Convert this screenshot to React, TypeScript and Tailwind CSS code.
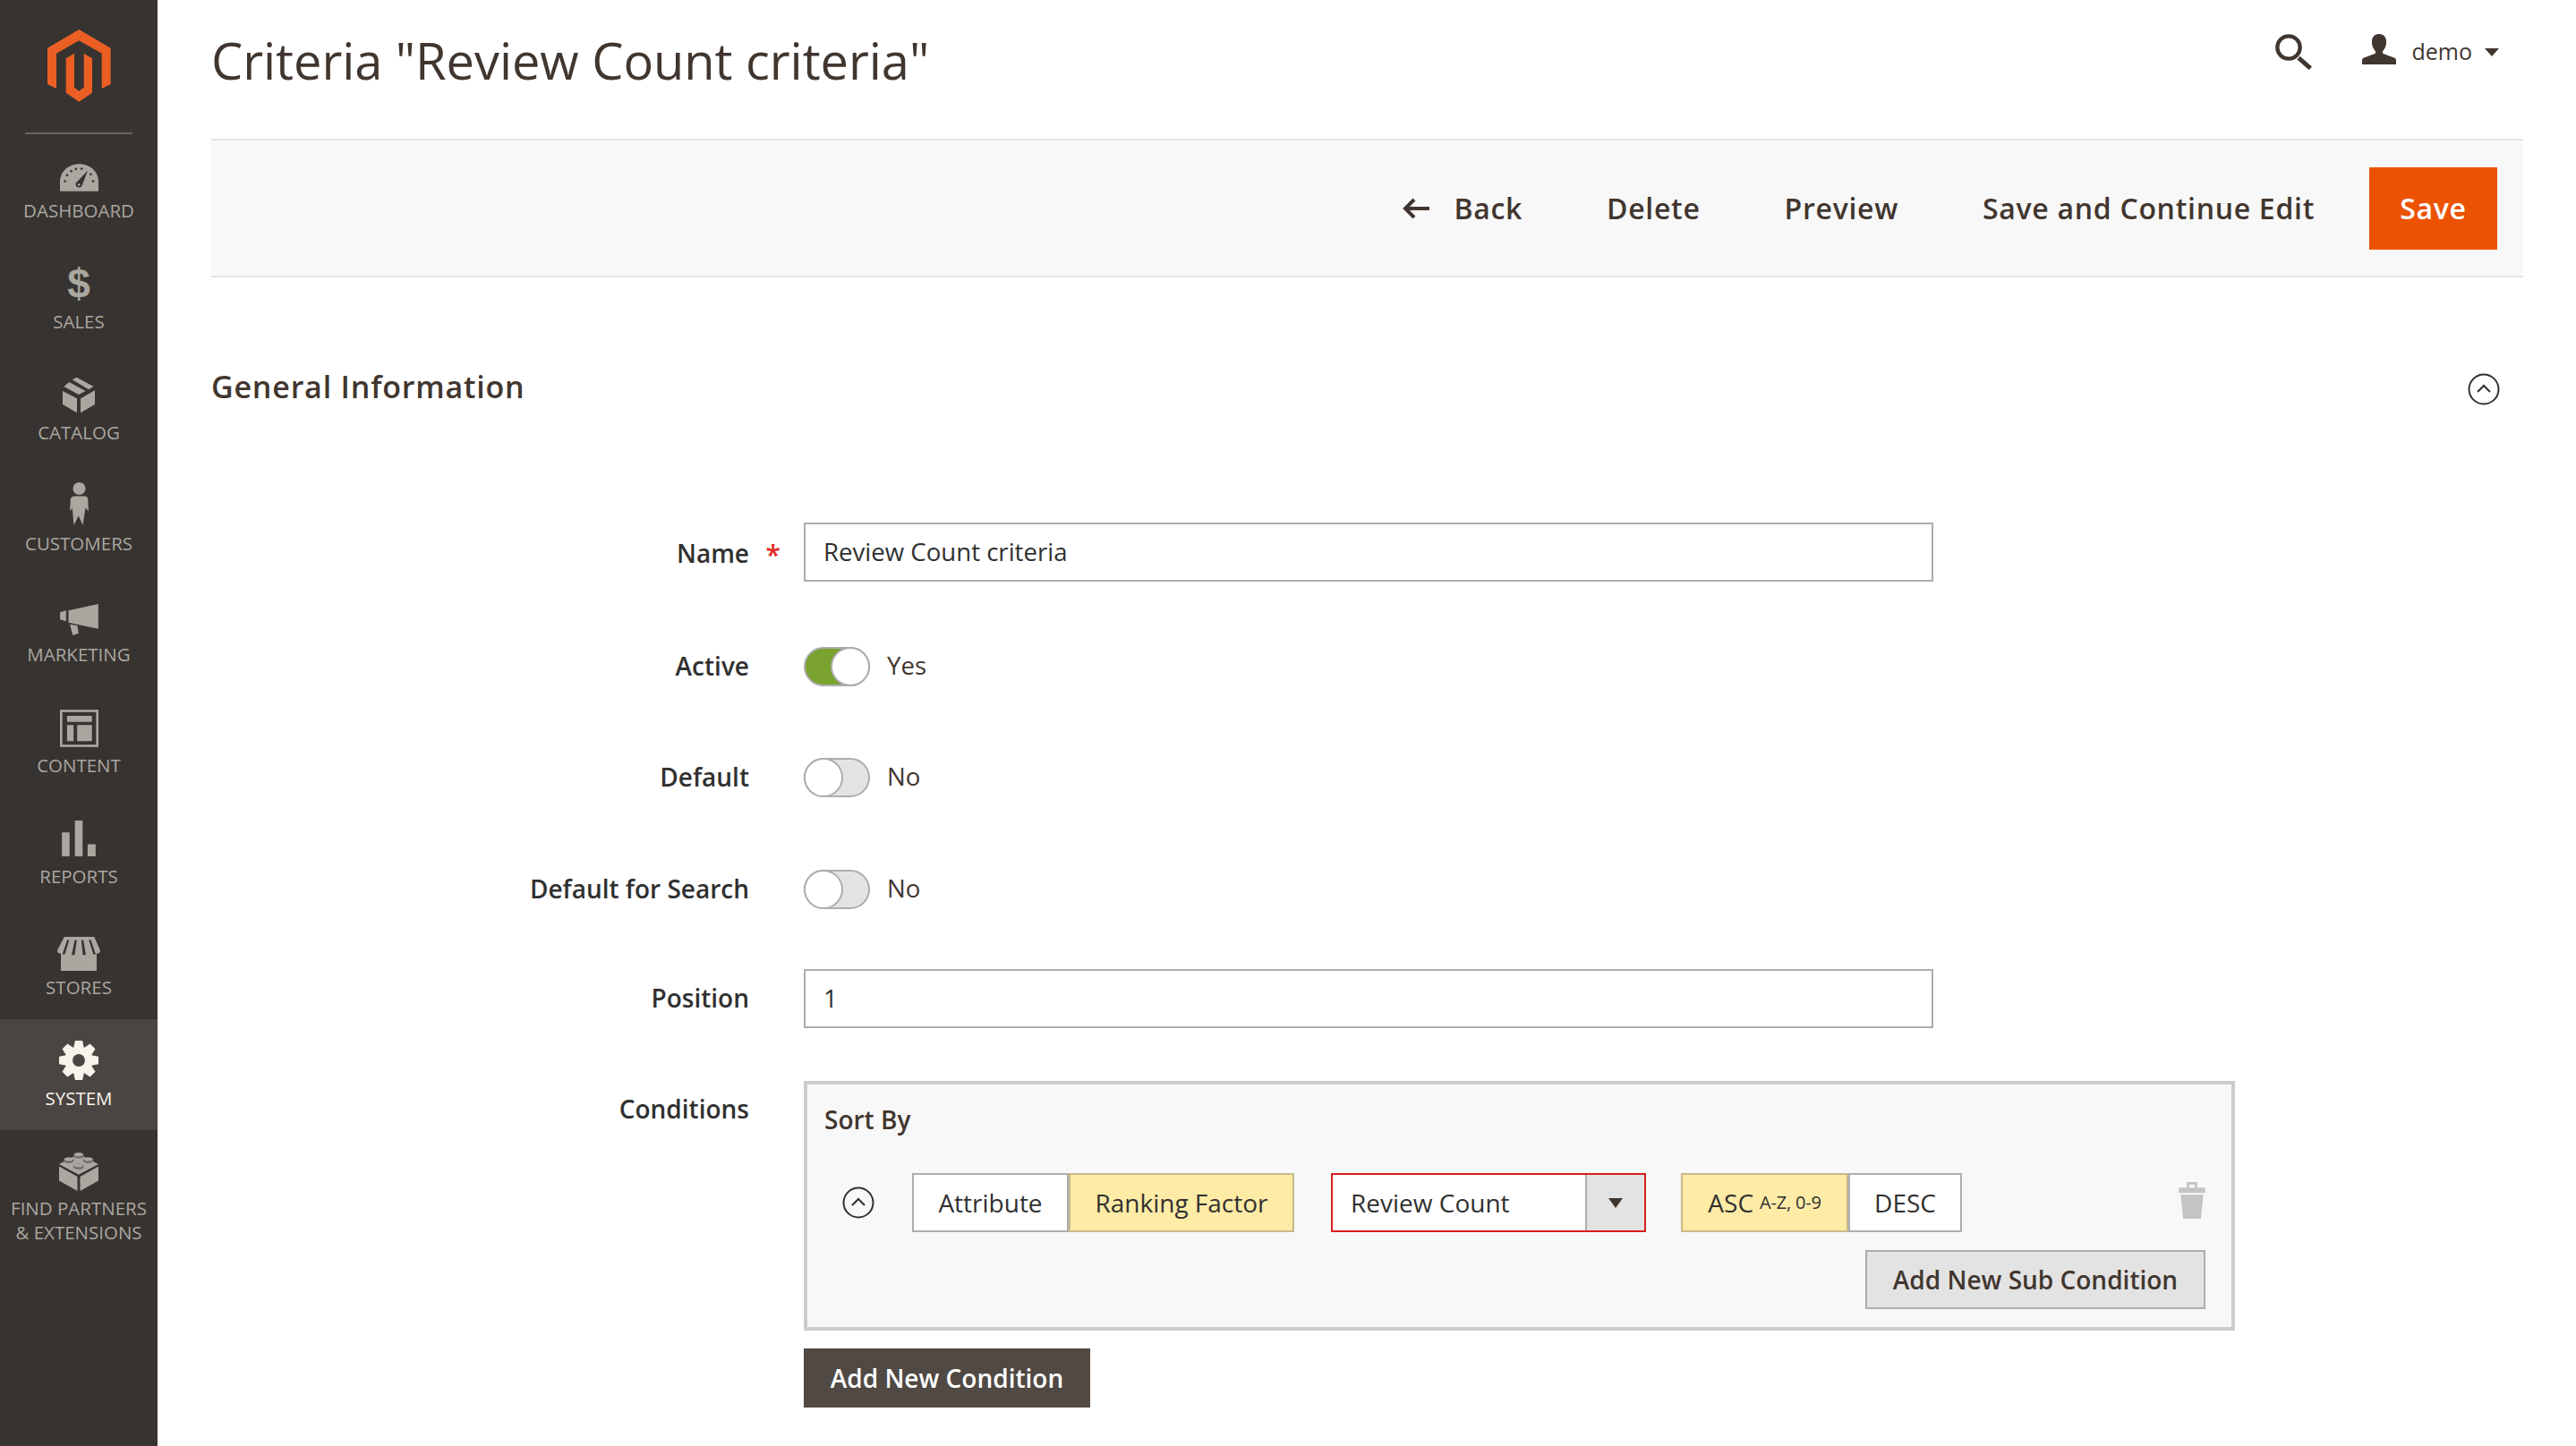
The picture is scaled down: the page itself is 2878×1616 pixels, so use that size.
import type { ReactNode } from "react";

const font = "font-['Open_Sans',sans-serif]";
const gearTeeth = [0, 45, 90, 135, 180, 225, 270, 315];

function Logo() {
  return (
    <svg viewBox="0 0 71 81" className="h-[81px] w-[71px]" fill="#eb5f24">
      <path d="M35.300 0 70.700 20.700V61l-10 5V26.700L35.300 12.300 10 26.700V66L0 61V20.700z" />
      <path d="M30 26.700 20.700 32.300v38.400l14.600 10 14.700-10V32.300l-9.300-5.600v38l-5.400 4-5.300-4z" />
    </svg>
  );
}

const icons: Record<string, ReactNode> = {
  dashboard: (
    <svg viewBox="0 0 130 92" className="h-[31px] w-[43px] translate-y-[5px]">
      <path fill="currentColor" d="M0 92V60C0 25 30 0 65 0s65 25 65 60v32z" />
      <g fill="#373330">
        <circle cx="17" cy="58" r="4" />
        <circle cx="24" cy="38" r="4" />
        <circle cx="38" cy="24" r="4" />
        <circle cx="54" cy="17" r="4" />
        <circle cx="73" cy="16" r="4" />
        <circle cx="104" cy="35" r="4" />
        <circle cx="112" cy="58" r="4" />
        <path d="M94 22 75 72a11 11 0 1 1-21-8z" />
      </g>
      <circle cx="64" cy="70" r="4" fill="currentColor" />
    </svg>
  ),
  catalog: (
    <svg viewBox="0 0 108 123" className="h-[41px] w-[36px]" fill="currentColor">
      <path d="m47 2 57 31-17 10-55-33zM22 18l55 30-23 12L4 33zM0 48l48 25v48L0 93zM60 73l48-27v47l-48 28z" />
    </svg>
  ),
  customers: (
    <svg viewBox="0 0 62 143" className="h-[48px] w-[21px] translate-y-[-2px]" fill="currentColor">
      <circle cx="31" cy="21" r="21" />
      <path d="M12 46h40q8 2 8 10l2 40-10-12-9 59-14-31-16 31-5-57-8 10 2-40q1-8 10-10z" />
    </svg>
  ),
  marketing: (
    <svg viewBox="0 0 128 105" className="h-[35px] w-[43px] translate-y-[3px]" fill="currentColor">
      <path d="m0 28 20-6v36L0 52zM28 22 128 0v83L28 62zM33 68l25 5 4 25-20 7z" />
    </svg>
  ),
  content: (
    <svg viewBox="0 0 130 126" className="h-[42px] w-[43px] translate-y-[1px]" fill="currentColor">
      <rect x="4" y="4" width="122" height="118" fill="none" stroke="currentColor" strokeWidth="8" />
      <path d="M24 21h84v20H24zM24 52h22v54H24zM58 52h50v54H58z" />
    </svg>
  ),
  reports: (
    <svg viewBox="0 0 114 121" className="h-[40px] w-[38px]" fill="currentColor">
      <path d="M0 40h26v81H0zM44 0h26v121H44zM87 80h27v41H87z" />
    </svg>
  ),
  stores: (
    <svg viewBox="0 0 143 113" className="h-[38px] w-[48px] translate-y-[5px]">
      <path fill="currentColor" d="M23 0h100l20 45q0 10-12 10v58H12V55Q0 55 0 45z" />
      <path fill="#373330" d="M33 10h7L25 58h-8zM58 10h7l-7 50H48zM80 10h7l8 50H85zM105 10h7l16 48h-8z" />
    </svg>
  ),
  system: (
    <svg viewBox="0 0 133 133" className="h-[44px] w-[44px]">
      {gearTeeth.map((a) => (
        <path key={a} fill="currentColor" transform={`rotate(${a} 66.500 66.500)`} d="M54 0h25l5 24H49z" />
      ))}
      <circle cx="66.500" cy="66.500" r="47" fill="currentColor" />
      <circle cx="66.500" cy="66.500" r="21" fill="#4a4542" />
    </svg>
  ),
  partners: (
    <svg viewBox="0 0 133 133" className="h-[44px] w-[44px] translate-y-[2px]">
      <path fill="currentColor" d="M0 50l62 35v48L0 98zM71 85l62-35v48l-62 35zM0 42 66 8l67 34-67 36z" />
      <g fill="#6e6a66">
        <ellipse cx="66" cy="13" rx="18" ry="10" />
        <ellipse cx="33" cy="29" rx="18" ry="10" />
        <ellipse cx="98" cy="29" rx="18" ry="10" />
        <ellipse cx="66" cy="50" rx="18" ry="10" />
      </g>
      <g fill="currentColor">
        <ellipse cx="66" cy="10" rx="15" ry="6" />
        <ellipse cx="33" cy="26" rx="15" ry="6" />
        <ellipse cx="98" cy="26" rx="15" ry="6" />
        <ellipse cx="66" cy="47" rx="15" ry="6" />
      </g>
    </svg>
  ),
};

const menu = [
  { label: ["DASHBOARD"], icon: icons.dashboard },
  {
    label: ["SALES"],
    icon: (
      <span className="font-['Liberation_Sans',sans-serif] text-[46px] leading-none font-bold">
        $
      </span>
    ),
  },
  { label: ["CATALOG"], icon: icons.catalog },
  { label: ["CUSTOMERS"], icon: icons.customers },
  { label: ["MARKETING"], icon: icons.marketing },
  { label: ["CONTENT"], icon: icons.content },
  { label: ["REPORTS"], icon: icons.reports },
  { label: ["STORES"], icon: icons.stores },
  { label: ["SYSTEM"], icon: icons.system, active: true },
  { label: ["FIND PARTNERS", "& EXTENSIONS"], icon: icons.partners },
];

function Sidebar() {
  return (
    <nav className="flex w-[176px] shrink-0 flex-col bg-[#373330]">
      <div className="mx-[28px] flex h-[150px] items-start justify-center border-b-2 border-[#6d6461] pt-[33px]">
        <Logo />
      </div>
      <div className="mt-[-3px]">
        {menu.map((item) => (
          <div
            key={item.label[0]}
            className={`flex h-[124px] flex-col items-center pt-[22px] text-center ${
              item.active ? "bg-[#4a4542] text-[#f7f3eb]" : "text-[#aaa6a0]"
            }`}
          >
            <div className="flex h-[48px] items-center justify-center">{item.icon}</div>
            <div
              className={`text-[20.500px] leading-[27px] whitespace-nowrap ${
                item.label.length > 1 ? "mt-[8px]" : "mt-[5px]"
              }`}
            >
              {item.label.map((line) => (
                <div key={line}>{line}</div>
              ))}
            </div>
          </div>
        ))}
      </div>
    </nav>
  );
}

function CollapseIcon() {
  return (
    <svg viewBox="0 0 36 36" className="h-[36px] w-[36px]" fill="none" stroke="#303030" strokeWidth="2">
      <circle cx="18" cy="18" r="16.500" />
      <path d="m11 21 7-7 7 7" />
    </svg>
  );
}

function Toggle({ on }: { on?: boolean }) {
  return (
    <div
      className={`relative h-[44px] w-[74px] rounded-full border-2 border-[#adadad] ${
        on ? "bg-[#79a22e]" : "bg-[#e3e3e3]"
      }`}
    >
      <div
        className={`absolute top-[-2px] h-[44px] w-[44px] rounded-full border-2 border-[#adadad] bg-white ${
          on ? "right-[-2px]" : "left-[-2px]"
        }`}
      />
    </div>
  );
}

function Row({ label, required, className, children }: { label: string; required?: boolean; className?: string; children: ReactNode }) {
  return (
    <div className={`flex items-center ${className ?? ""}`}>
      <div
        className={`relative w-[601px] shrink-0 text-right text-[28px] leading-[62px] font-semibold text-[#303030] ${
          required ? "pt-[2px]" : "pb-[2px]"
        }`}
      >
        {label}
        {required && (
          <span className="absolute right-[-35px] top-[4px] text-[30px] text-[#e22626]">*</span>
        )}
      </div>
      <div className="ml-[61px] flex h-[64px] items-center">{children}</div>
    </div>
  );
}

function TextBox({ value }: { value: string }) {
  return (
    <div className="flex h-[66px] w-[1262px] items-center border-2 border-[#adadad] bg-white px-[20px] pb-[1px] text-[27.600px] text-[#303030]">
      {value}
    </div>
  );
}

function ToggleText({ children }: { children: ReactNode }) {
  return <span className="ml-[19px] pb-[2px] text-[27.600px] text-[#41362f]">{children}</span>;
}

function Segment({ children, active, width }: { children: ReactNode; active?: boolean; width: string }) {
  return (
    <div
      className={`flex h-[66px] items-center justify-center border-2 pb-[1px] text-[28px] text-[#303030] ${width} ${
        active ? "border-[#c7b98a] bg-[#fdeba6]" : "border-[#adadad] bg-white"
      }`}
    >
      {children}
    </div>
  );
}

const actions = ["Delete", "Preview", "Save and Continue Edit"];

export default function App() {
  return (
    <div className={`flex h-[1616px] w-[2878px] overflow-hidden bg-white ${font}`}>
      <Sidebar />
      <main className="flex-1 pl-[60px] pr-[59px]">
        <header className="flex h-[155px] items-start justify-between pt-[33px]">
          <h1 className="text-[56px] leading-[68px] tracking-[-0.06px] text-[#41362f]">
            Criteria "Review Count criteria"
          </h1>
          <div className="flex h-[44px] items-center pr-[27px] pt-[6px] text-[25px] text-[#41362f]">
            <svg viewBox="0 0 123 120" className="h-[40px] w-[41px]" fill="none" stroke="#41362f">
              <circle cx="45" cy="45" r="38" strokeWidth="13" />
              <path d="m78 80 40 35" strokeWidth="15" />
            </svg>
            <svg viewBox="0 0 115 103" className="ml-[56px] mt-[-6px] h-[34px] w-[38px]" fill="#41362f">
              <path d="M57 0c18 0 25 12 25 28 0 14-7 24-12 30v8l42 16q3 2 3 8v13H0V90q0-6 3-8l42-16v-8c-5-6-12-16-12-30C33 12 40 0 57 0z" />
            </svg>
            <span className="ml-[17px]">demo</span>
            <span className="ml-[14px] h-0 w-0 border-x-[8px] border-t-[9px] border-x-transparent border-t-[#41362f]" />
          </div>
        </header>

        <div className="flex h-[155px] items-center justify-end border-y-2 border-[#e3e3e3] bg-[#f8f8f8] pr-[29px] text-[32px] font-semibold tracking-[0.7px] text-[#41362f]">
          <svg viewBox="0 0 30 24" className="mr-[27px] h-[24px] w-[30px]" fill="none" stroke="#41362f" strokeWidth="4">
            <path d="M30 12H3M13 2 3 12l10 10" />
          </svg>
          <span>Back</span>
          {actions.map((a) => (
            <span key={a} className="ml-[94px]">
              {a}
            </span>
          ))}
          <button className="ml-[61px] h-[92px] w-[143px] bg-[#eb5202] text-[32px] font-semibold tracking-[0.7px] text-white">
            Save
          </button>
        </div>

        <div className="flex h-[145px] items-end justify-between">
          <h2 className="text-[34px] leading-[46px] font-semibold tracking-[0.8px] text-[#41362f]">
            General Information
          </h2>
          <div className="mr-[26px] mb-[2px]">
            <CollapseIcon />
          </div>
        </div>

        <div className="mt-[130px] flex flex-col">
          <Row label="Name" required>
            <TextBox value="Review Count criteria" />
          </Row>
          <Row label="Active" className="mt-[64px]">
            <Toggle on />
            <ToggleText>Yes</ToggleText>
          </Row>
          <Row label="Default" className="mt-[60px]">
            <Toggle />
            <ToggleText>No</ToggleText>
          </Row>
          <Row label="Default for Search" className="mt-[61px]">
            <Toggle />
            <ToggleText>No</ToggleText>
          </Row>
          <Row label="Position" className="mt-[58px]">
            <TextBox value="1" />
          </Row>

          <div className="mt-[60px] flex items-start">
            <div className="w-[601px] shrink-0 pb-[2px] text-right text-[28px] leading-[62px] font-semibold text-[#303030]">
              Conditions
            </div>
            <div className="ml-[61px]">
              <div className="w-[1599px] border-4 border-[#cccccc] bg-[#f8f8f8] pb-[20px] pl-[19px] pr-[29px]">
                <div className="pt-[20px] text-[28px] leading-[38px] font-semibold text-[#41362f]">
                  Sort By
                </div>
                <div className="mt-[41px] flex items-center">
                  <div className="ml-[20px]">
                    <CollapseIcon />
                  </div>
                  <div className="ml-[42px] flex">
                    <Segment width="w-[175px]">Attribute</Segment>
                    <Segment width="w-[252px]" active>
                      Ranking Factor
                    </Segment>
                  </div>
                  <div className="ml-[41px] flex h-[66px] w-[352px] border-2 border-[#d71f1f] bg-white pb-[1px] text-[28px] text-[#303030]">
                    <div className="flex flex-1 items-center pl-[20px]">Review Count</div>
                    <div className="mb-[-1px] flex w-[66px] items-center justify-center border-l-2 border-[#adadad] bg-[#e3e3e3]">
                      <span className="h-0 w-0 border-x-[8px] border-t-[11px] border-x-transparent border-t-[#41362f]" />
                    </div>
                  </div>
                  <div className="ml-[39px] flex">
                    <Segment width="w-[187px]" active>
                      ASC<span className="ml-[7px] text-[20px] tracking-[-0.2px]">A-Z, 0-9</span>
                    </Segment>
                    <Segment width="w-[127px]">DESC</Segment>
                  </div>
                  <svg viewBox="0 0 86 120" className="ml-auto h-[41px] w-[30px] translate-y-[-3px]" fill="#c4c4c4">
                    <path d="M26 0h34v18h26v18H0V18h26zm8 8v10h18V8z" fillRule="evenodd" />
                    <path d="M6 42h74l-8 78H14z" />
                  </svg>
                </div>
                <div className="mt-[20px] flex justify-end">
                  <button className="h-[66px] w-[380px] border-2 border-[#adadad] bg-[#e3e3e3] text-[28px] font-semibold text-[#41362f]">
                    Add New Sub Condition
                  </button>
                </div>
              </div>
              <button className="mt-[20px] h-[66px] w-[320px] bg-[#514943] text-[28px] font-semibold text-white">
                Add New Condition
              </button>
            </div>
          </div>
        </div>
      </main>
    </div>
  );
}
